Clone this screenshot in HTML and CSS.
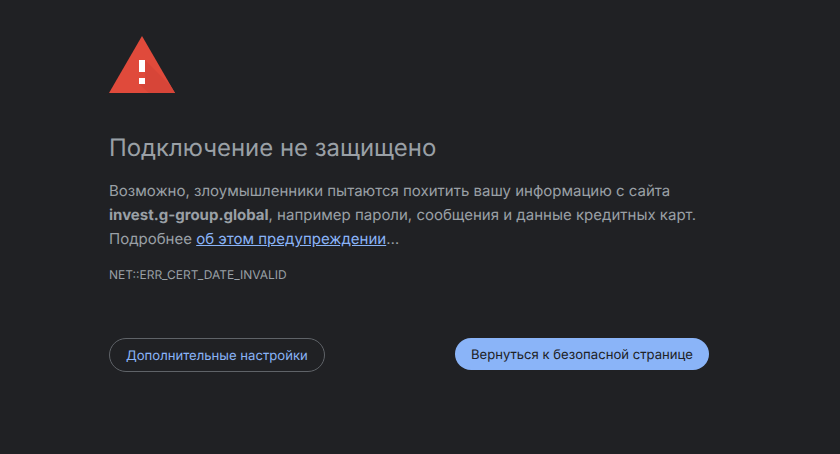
FILE: index.html
```html
<!DOCTYPE html>
<html lang="ru">
  <head>
    <meta charset="UTF-8">
    <title>Ошибка конфиденциальности</title>
    <link rel="stylesheet" href="styles.css">
  </head>
  <body>
    <div class="wrapper">
      <svg class="icon" width="66" height="57" viewBox="0 0 66 57">
        <polygon points="33,0 66,57 0,57" fill="#e04a3b"/>
        <polygon points="36,24 61,49 66,57 40,57 30,48 36,44" fill="#d74538"/>
        <rect x="30" y="24" width="6" height="12" fill="#fff"/>
        <rect x="30" y="42" width="6" height="6" fill="#fff"/>
      </svg>
      <h1 class="title">Подключение не защищено</h1>
      <p class="message">Возможно, злоумышленники пытаются похитить вашу информацию с сайта <strong>invest.g-group.global</strong>, например пароли, сообщения и данные кредитных карт. Подробнее <a href="#">об этом предупреждении</a>…</p>
      <div class="code">NET::ERR_CERT_DATE_INVALID</div>
      <div class="buttons">
        <button type="button" class="btn btn-outline">Дополнительные настройки</button>
        <button type="button" class="btn btn-primary">Вернуться к безопасной странице</button>
      </div>
    </div>
  </body>
</html>
```

FILE: styles.css
```css
html, body {
  height: 100%;
}
body {
  margin: 0;
  background-color: #202124;
  color: #9aa0a6;
  font-family: Inter, sans-serif;
  text-rendering: geometricPrecision;
  overflow: hidden;
}
.wrapper {
  width: 600px;
  margin-left: 109px;
  padding-top: 36px;
}
.icon {
  display: block;
}
.title {
  margin: 40px 0 0;
  font-size: 23.92px;
  font-weight: 400;
  line-height: 30px;
  color: #9aa0a6;
}
.message {
  margin: 16px 0 0;
  font-size: 15px;
  line-height: 24px;
}
.message strong {
  font-weight: 700;
}
.message a {
  color: #8ab4f8;
}
.code {
  margin-top: 16px;
  font-size: 12px;
  line-height: 16px;
}
.buttons {
  display: flex;
  justify-content: space-between;
  align-items: flex-start;
  margin-top: 55px;
}
.btn {
  height: 34px;
  padding: 1px 16px 0;
  border-radius: 17px;
  font-family: Inter, sans-serif;
  font-size: 13.125px;
  text-rendering: geometricPrecision;
  white-space: nowrap;
}
.btn-outline {
  border: 1px solid #5f6368;
  background: transparent;
  color: #8ab4f8;
}
.btn-primary {
  height: 32px;
  border: 0;
  border-radius: 16px;
  background-color: #8ab4f8;
  color: #202124;
}
```
